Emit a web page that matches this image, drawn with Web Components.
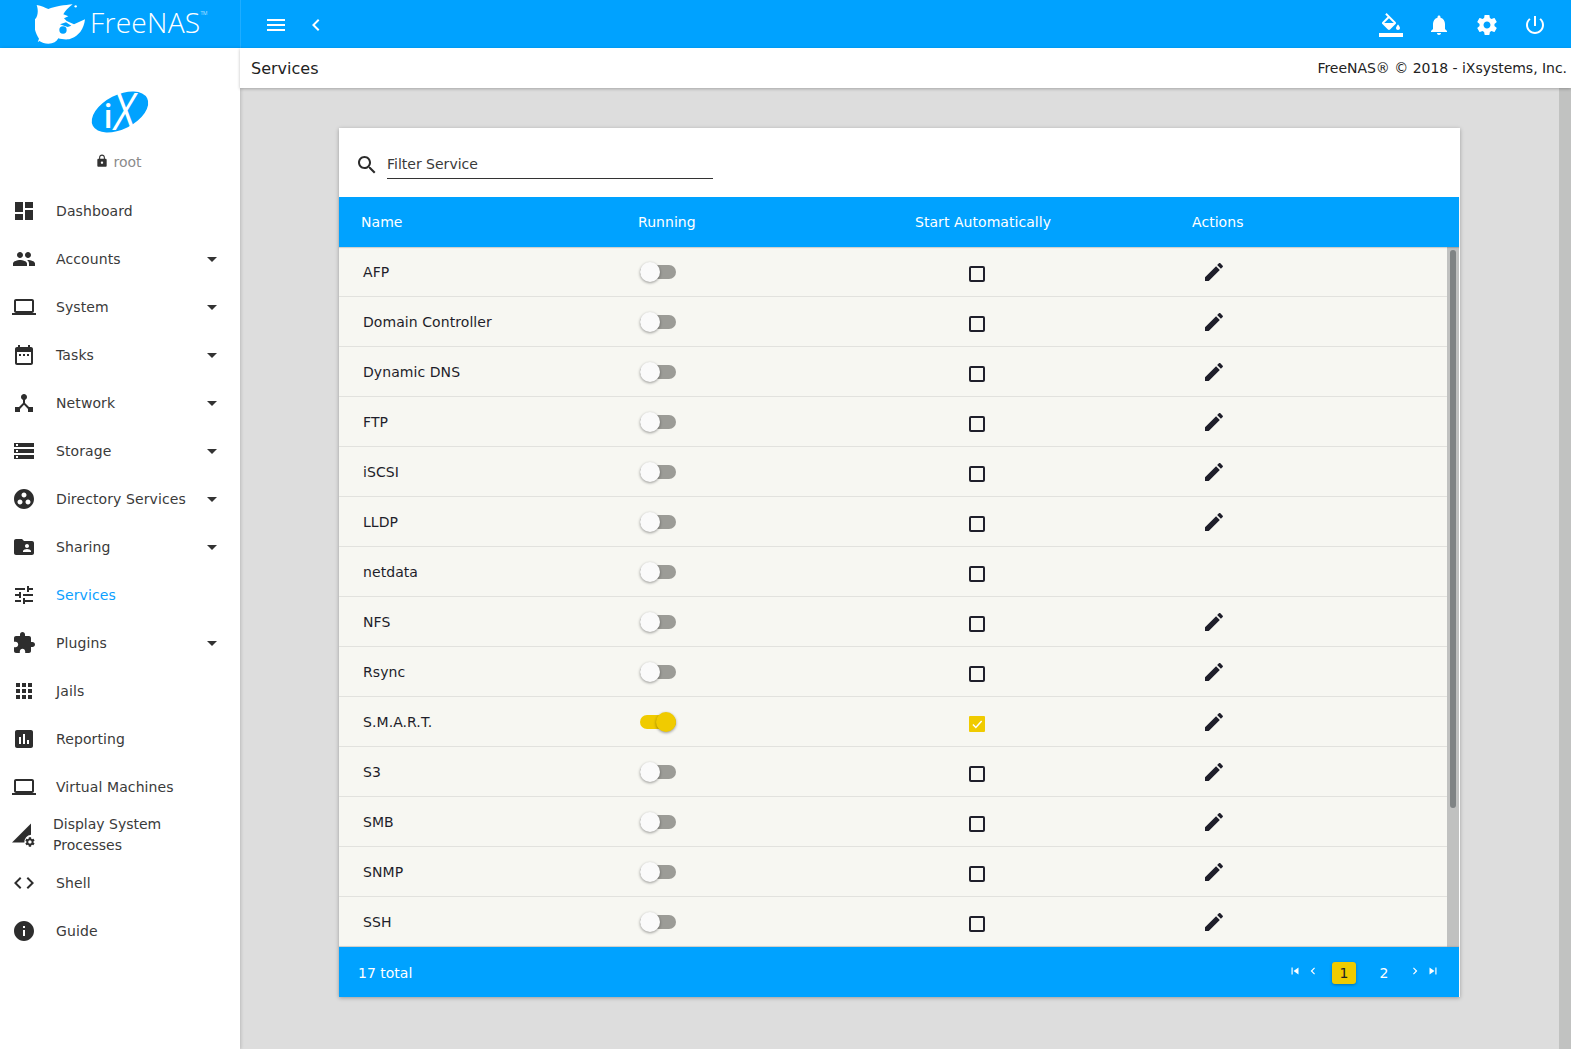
<!DOCTYPE html>
<html lang="en">
<head>
<meta charset="utf-8">
<title>FreeNAS - Services</title>
<style>
html,body{margin:0;padding:0;height:100%;overflow:hidden;background:#ddd;font-family:"DejaVu Sans",sans-serif;font-size:14px;color:#333}
fn-app{height:1049px}
</style>
</head>
<body>
<fn-app></fn-app>
<script>
const ICONS={
dashboard:'<path d="M3 13h8V3H3v10zm0 8h8v-6H3v6zm10 0h8V11h-8v10zm0-18v6h8V3h-8z"/>',
group:'<path d="M16 11c1.66 0 2.99-1.34 2.99-3S17.66 5 16 5c-1.66 0-3 1.34-3 3s1.34 3 3 3zm-8 0c1.66 0 2.99-1.34 2.99-3S9.66 5 8 5C6.34 5 5 6.34 5 8s1.34 3 3 3zm0 2c-2.33 0-7 1.17-7 3.5V19h14v-2.5c0-2.33-4.67-3.5-7-3.5zm8 0c-.29 0-.62.02-.97.05 1.16.84 1.97 1.97 1.97 3.45V19h6v-2.5c0-2.33-4.67-3.5-7-3.5z"/>',
laptop:'<path d="M20 18c1.1 0 1.99-.9 1.99-2L22 6c0-1.1-.9-2-2-2H4c-1.1 0-2 .9-2 2v10c0 1.1.9 2 2 2H0v2h24v-2h-4zM4 6h16v10H4V6z"/>',
date:'<path d="M9 11H7v2h2v-2zm4 0h-2v2h2v-2zm4 0h-2v2h2v-2zm2-7h-1V2h-2v2H8V2H6v2H5c-1.11 0-1.99.9-1.99 2L3 20c0 1.1.89 2 2 2h14c1.1 0 2-.9 2-2V6c0-1.1-.9-2-2-2zm0 16H5V9h14v11z"/>',
hub:'<path d="M17 16l-4-4V8.82C14.16 8.4 15 7.3 15 6c0-1.66-1.34-3-3-3S9 4.34 9 6c0 1.3.84 2.4 2 2.82V12l-4 4H3v5h5v-3.05l4-4.2 4 4.2V21h5v-5h-4z"/>',
storage:'<path d="M2 20h20v-4H2v4zm2-3h2v2H4v-2zM2 4v4h20V4H2zm4 3H4V5h2v2zm-4 7h20v-4H2v4zm2-3h2v2H4v-2z"/>',
work:'<path d="M12 2C6.48 2 2 6.48 2 12s4.48 10 10 10 10-4.48 10-10S17.52 2 12 2zM8 17.5c-1.38 0-2.5-1.12-2.5-2.5s1.12-2.5 2.5-2.5 2.5 1.12 2.5 2.5-1.12 2.5-2.5 2.5zM9.5 8c0-1.38 1.12-2.5 2.5-2.5s2.5 1.12 2.5 2.5-1.12 2.5-2.5 2.5S9.5 9.38 9.5 8zm6.5 9.5c-1.38 0-2.5-1.12-2.5-2.5s1.12-2.5 2.5-2.5 2.5 1.12 2.5 2.5-1.12 2.5-2.5 2.5z"/>',
folder:'<path d="M20 6h-8l-2-2H4c-1.1 0-1.99.9-1.99 2L2 18c0 1.1.9 2 2 2h16c1.1 0 2-.9 2-2V8c0-1.1-.9-2-2-2zm-5 3c1.1 0 2 .9 2 2s-.9 2-2 2-2-.9-2-2 .9-2 2-2zm4 8h-8v-1c0-1.33 2.67-2 4-2s4 .67 4 2v1z"/>',
tune:'<path d="M3 17v2h6v-2H3zM3 5v2h10V5H3zm10 16v-2h8v-2h-8v-2h-2v6h2zM7 9v2H3v2h4v2h2V9H7zm14 4v-2H11v2h10zm-6-4h2V7h4V5h-4V3h-2v6z"/>',
ext:'<path d="M20.5 11H19V7c0-1.1-.9-2-2-2h-4V3.5C13 2.12 11.88 1 10.5 1S8 2.12 8 3.5V5H4c-1.1 0-1.99.9-1.99 2v3.8H3.5c1.49 0 2.7 1.21 2.7 2.7s-1.21 2.7-2.7 2.7H2V20c0 1.1.9 2 2 2h3.8v-1.5c0-1.49 1.21-2.7 2.7-2.7 1.49 0 2.7 1.21 2.7 2.7V22H17c1.1 0 2-.9 2-2v-4h1.5c1.38 0 2.5-1.12 2.5-2.5S21.88 11 20.5 11z"/>',
apps:'<path d="M4 8h4V4H4v4zm6 12h4v-4h-4v4zm-6 0h4v-4H4v4zm0-6h4v-4H4v4zm6 0h4v-4h-4v4zm6-10v4h4V4h-4zm-6 4h4V4h-4v4zm6 6h4v-4h-4v4zm0 6h4v-4h-4v4z"/>',
chart:'<path d="M19 3H5c-1.1 0-2 .9-2 2v14c0 1.1.9 2 2 2h14c1.1 0 2-.9 2-2V5c0-1.1-.9-2-2-2zM9 17H7v-7h2v7zm4 0h-2V7h2v10zm4 0h-2v-4h2v4z"/>',
procs:'<path d="M0 19.5 19 .5v11.2a7.4 7.4 0 0 0-6.6 7.8z"/><g transform="translate(12.3 13.3) scale(.47)"><path d="M19.43 12.98c.04-.32.07-.64.07-.98s-.03-.66-.07-.98l2.11-1.65c.19-.15.24-.42.12-.64l-2-3.46c-.12-.22-.39-.3-.61-.22l-2.49 1c-.52-.4-1.08-.73-1.69-.98l-.38-2.65C14.46 2.18 14.25 2 14 2h-4c-.25 0-.46.18-.49.42l-.38 2.65c-.61.25-1.17.59-1.69.98l-2.49-1c-.23-.09-.49 0-.61.22l-2 3.46c-.13.22-.07.49.12.64l2.11 1.65c-.04.32-.07.65-.07.98s.03.66.07.98l-2.11 1.65c-.19.15-.24.42-.12.64l2 3.46c.12.22.39.3.61.22l2.49-1c.52.4 1.08.73 1.69.98l.38 2.65c.03.24.24.42.49.42h4c.25 0 .46-.18.49-.42l.38-2.65c.61-.25 1.17-.59 1.69-.98l2.49 1c.23.09.49 0 .61-.22l2-3.46c.12-.22.07-.49-.12-.64l-2.11-1.65zM12 15.5c-1.93 0-3.5-1.57-3.5-3.5s1.57-3.5 3.5-3.5 3.5 1.57 3.5 3.5-1.57 3.5-3.5 3.5z"/></g>',
code:'<path d="M9.4 16.6L4.8 12l4.6-4.6L8 6l-6 6 6 6 1.4-1.4zm5.2 0l4.6-4.6-4.6-4.6L16 6l6 6-6 6-1.4-1.4z"/>',
info:'<path d="M12 2C6.48 2 2 6.48 2 12s4.48 10 10 10 10-4.48 10-10S17.52 2 12 2zm1 15h-2v-6h2v6zm0-8h-2V7h2v2z"/>',
gear:'<path d="M19.43 12.98c.04-.32.07-.64.07-.98s-.03-.66-.07-.98l2.11-1.65c.19-.15.24-.42.12-.64l-2-3.46c-.12-.22-.39-.3-.61-.22l-2.49 1c-.52-.4-1.08-.73-1.69-.98l-.38-2.65C14.46 2.18 14.25 2 14 2h-4c-.25 0-.46.18-.49.42l-.38 2.65c-.61.25-1.17.59-1.69.98l-2.49-1c-.23-.09-.49 0-.61.22l-2 3.46c-.13.22-.07.49.12.64l2.11 1.65c-.04.32-.07.65-.07.98s.03.66.07.98l-2.11 1.65c-.19.15-.24.42-.12.64l2 3.46c.12.22.39.3.61.22l2.49-1c.52.4 1.08.73 1.69.98l.38 2.65c.03.24.24.42.49.42h4c.25 0 .46-.18.49-.42l.38-2.65c.61-.25 1.17-.59 1.69-.98l2.49 1c.23.09.49 0 .61-.22l2-3.46c.12-.22.07-.49-.12-.64l-2.11-1.65zM12 15.5c-1.93 0-3.5-1.57-3.5-3.5s1.57-3.5 3.5-3.5 3.5 1.57 3.5 3.5-1.57 3.5-3.5 3.5z"/>',
bell:'<path d="M12 22c1.1 0 2-.9 2-2h-4c0 1.1.89 2 2 2zm6-6v-5c0-3.07-1.64-5.64-4.5-6.32V4c0-.83-.67-1.5-1.5-1.5s-1.5.67-1.5 1.5v.68C7.63 5.36 6 7.92 6 11v5l-2 2v1h16v-1l-2-2z"/>',
power:'<path d="M13 3h-2v10h2V3zm4.83 2.17l-1.42 1.42C17.99 7.86 19 9.81 19 12c0 3.87-3.13 7-7 7s-7-3.13-7-7c0-2.19 1.01-4.14 2.58-5.42L6.17 5.17C4.23 6.82 3 9.26 3 12c0 4.97 4.03 9 9 9s9-4.03 9-9c0-2.74-1.23-5.18-3.17-6.83z"/>',
fill:'<path d="M16.56 8.94L7.62 0 6.21 1.41l2.38 2.38-5.15 5.15c-.59.59-.59 1.54 0 2.12l5.5 5.5c.29.29.68.44 1.06.44s.77-.15 1.06-.44l5.5-5.5c.59-.58.59-1.53 0-2.12zM5.21 10L10 5.21 14.79 10H5.21zM19 11.5s-2 2.17-2 3.5c0 1.1.9 2 2 2s2-.9 2-2c0-1.33-2-3.5-2-3.5z"/><path d="M0 20h24v4H0z"/>',
pencil:'<path d="M3 17.25V21h3.75L17.81 9.94l-3.75-3.75L3 17.25zM20.71 7.04c.39-.39.39-1.02 0-1.41l-2.34-2.34c-.39-.39-1.02-.39-1.41 0l-1.83 1.83 3.75 3.75 1.83-1.83z"/>',
search:'<path d="M15.5 14h-.79l-.28-.27C15.41 12.59 16 11.11 16 9.5 16 5.91 13.09 3 9.5 3S3 5.91 3 9.5 5.91 16 9.5 16c1.61 0 3.09-.59 4.23-1.57l.27.28v.79l5 4.99L20.49 19l-4.99-5zm-6 0C7.01 14 5 11.99 5 9.5S7.01 5 9.5 5 14 7.01 14 9.5 11.99 14 9.5 14z"/>',
lock:'<path d="M18 8h-1V6c0-2.76-2.24-5-5-5S7 3.24 7 6v2H6c-1.1 0-2 .9-2 2v10c0 1.1.9 2 2 2h12c1.1 0 2-.9 2-2V10c0-1.1-.9-2-2-2zm-6 9c-1.1 0-2-.9-2-2s.9-2 2-2 2 .9 2 2-.9 2-2 2zm3.1-9H8.9V6c0-1.71 1.39-3.1 3.1-3.1 1.71 0 3.1 1.39 3.1 3.1v2z"/>',
back:'<path d="M15.41 7.41L14 6l-6 6 6 6 1.41-1.41L10.83 12z"/>',
fwd:'<path d="M8.59 16.59L10 18l6-6-6-6-1.41 1.41L13.17 12z"/>',
menu:'<path d="M3 18h18v-2H3v2zm0-5h18v-2H3v2zm0-7v2h18V6H3z"/>',
first:'<path d="M6 6h2v12H6zm3.5 6l8.5 6V6z"/>',
last:'<path d="M6 18l8.5-6L6 6v12zM16 6v12h2V6h-2z"/>'
};
function def(name,css,html,init){
  customElements.define(name,class extends HTMLElement{
    connectedCallback(){
      if(this.shadowRoot)return;
      const r=this.attachShadow({mode:'open'});
      const a=n=>this.getAttribute(n);
      r.innerHTML='<style>'+css+'</style>'+(typeof html==='function'?html(a,this):html);
      if(init)init(r,this);
    }
  });
}
def('fn-icon',':host{display:inline-flex;width:var(--s,24px);height:var(--s,24px);flex:none}svg{width:100%;height:100%;fill:currentColor;display:block}',
  a=>`<svg viewBox="0 0 24 24" aria-hidden="true">${ICONS[a('name')]||''}</svg>`);

def('fn-brand',`:host{display:flex;align-items:center;width:241px;height:48px;flex:none;box-sizing:border-box;border-right:1px solid rgba(255,255,255,.12);color:#fff;padding-left:35px}
svg{width:52px;height:46px;flex:none;display:block}
.t{font:300 28.2px/44px "Open Sans",sans-serif;margin:0 0 4px 3px;letter-spacing:.25px}
.tm{font:300 5px/1 "Open Sans",sans-serif;align-self:flex-start;margin-top:11px}`,
`<svg viewBox="105 0 156 138" aria-hidden="true"><path fill="#fff" d="M110 12C125 14 135 20 145 24C165 16 195 12 218 10C205 20 195 30 190 40L205 46L192 52L200 60L222 70L255 55C252 85 235 105 215 112C205 118 185 115 175 112C170 122 160 128 145 128C135 128 125 125 118 120L113 124L117 113C105 95 100 75 105 55C115 45 115 25 110 12Z"/><circle cx="189" cy="87" r="11" fill="#00a2ff"/><path fill="#00a2ff" d="M180 70L198 64L214 74L203 78L192 74Z"/><circle cx="227" cy="16" r="3.5" fill="#fff"/></svg><span class="t">FreeNAS</span><span class="tm">TM</span>`);

def('fn-topbar',`:host{display:flex;align-items:center;height:48px;background:#00a2ff;color:#fff;flex:none}
.l{display:flex;align-items:center;margin-left:23px;margin-top:2px}.l fn-icon+fn-icon{margin-left:16px}
.sp{flex:1}
.r{display:flex;align-items:center;gap:24px;margin-right:24px;margin-top:2px}`,
`<fn-brand></fn-brand><div class="l"><fn-icon name="menu"></fn-icon><fn-icon name="back"></fn-icon></div><div class="sp"></div><div class="r"><fn-icon name="fill"></fn-icon><fn-icon name="bell"></fn-icon><fn-icon name="gear"></fn-icon><fn-icon name="power"></fn-icon></div>`);

def('fn-nav-item',`:host{display:flex;align-items:center;height:48px;padding-left:12px;padding-right:23px;font-size:14px;line-height:21px;color:#3a3a3a;flex:none;letter-spacing:.1px}
:host([active]){color:#0d9fff}
fn-icon{color:#2d2d2d}
.x{flex:1;margin-left:20px}
:host([tight]) .x{margin-left:17px;width:140px;flex:none;letter-spacing:0}
.c{width:0;height:0;border-left:5px solid transparent;border-right:5px solid transparent;border-top:5px solid #333}`,
(a,el)=>`<fn-icon name="${a('icon')}"></fn-icon><span class="x"><slot></slot></span>${a('caret')!==null?'<span class="c"></span>':''}`);

def('fn-sidebar',`:host{display:flex;flex-direction:column;width:240px;flex:none;background:#fff;box-shadow:1px 0 3px rgba(0,0,0,.16);z-index:1}
.p{height:139px;display:flex;flex-direction:column;align-items:center;flex:none}
svg.ix{width:64px;height:50px;margin-top:40px;display:block;overflow:visible}
.u{display:flex;align-items:center;margin-top:14px;color:#8b8b8b;font-size:14px;line-height:20px;margin-left:-3px}
.u fn-icon{--s:14px;color:#333;margin-right:4px;margin-top:-2px}`,
`<div class="p"><svg class="ix" viewBox="0 0 64 50" aria-hidden="true"><ellipse cx="32" cy="24" rx="30.5" ry="17" fill="#00a2ff" transform="rotate(-27 32 24)"/><text x="15.5" y="40" font-family="Open Sans" font-size="33" font-weight="600" fill="#fff">i</text><text transform="translate(24 42) skewX(-6) scale(.76 1)" font-family="Open Sans" font-size="52" font-weight="400" fill="#fff">X</text></svg><div class="u"><fn-icon name="lock"></fn-icon><span>root</span></div></div>
<slot></slot>`);

def('fn-pagehead',`:host{display:flex;align-items:center;justify-content:space-between;height:40px;background:#fff;box-shadow:0 1px 3px rgba(0,0,0,.25);padding:0 4px 0 11px;flex:none;z-index:1;color:#222}
.t{font-size:16px}.c{font-size:14px;letter-spacing:-.03px}`,
`<span class="t"><slot name="title"></slot></span><span class="c"><slot name="copy"></slot></span>`);

def('fn-switch',`:host{display:inline-block;position:relative;width:36px;height:14px;border-radius:7px;background:#9c9c97;flex:none}
i{position:absolute;top:-3px;left:0;width:20px;height:20px;border-radius:50%;background:#fafafa;box-shadow:0 1px 3px rgba(0,0,0,.4)}
:host([on]){background:#f0cb00}
:host([on]) i{left:16px;background:#f0cb00}`,`<i></i>`);

def('fn-check',`:host{display:inline-flex;width:16px;height:16px;box-sizing:border-box;border:2px solid #1f1f2b;border-radius:2px;flex:none;position:relative;top:2px}
:host([on]){background:#f0cb00;border-color:#f0cb00;border-radius:1px}
svg{width:14px;height:14px;margin:-1px;display:block}`,
a=>a('on')!==null?`<svg viewBox="0 0 24 24" fill="none" stroke="#fff" stroke-width="2.6"><path d="M5 13l5 5L20 7"/></svg>`:'');

def('fn-service-row',`:host{display:grid;grid-template-columns:277px 277px 277px 1fr;align-items:center;height:50px;box-sizing:border-box;padding-left:24px;border-bottom:1px solid #e2e2de;color:#1e1e2a;font-size:14px;flex:none;letter-spacing:.07px}
.s{display:flex;align-items:center;padding-left:0}
.k{display:flex;padding-left:52px}
.a{display:flex;padding-left:8px;color:#1e1e2a}`,
a=>`<span><slot></slot></span><div class="s"><fn-switch ${a('on')!==null?'on':''}></fn-switch></div><div class="k"><fn-check ${a('on')!==null?'on':''}></fn-check></div><div class="a">${a('noedit')!==null?'':'<fn-icon name="pencil"></fn-icon>'}</div>`);

def('fn-pager',`:host{display:flex;align-items:center;height:50px;background:#00a2ff;color:#fff;font-size:14px;padding:0 19px 0 19px;flex:none;box-shadow:0 -1px 1px rgba(0,0,0,.08)}
.t{flex:1;padding-top:1px}
fn-icon{--s:14px;margin-top:-3px}
.b{display:flex;align-items:center;justify-content:center;width:24px;height:22px;border-radius:3px;background:#f0cb00;color:#222;box-shadow:0 1px 3px rgba(0,0,0,.3);margin:1px 0 0 12px}
.n{width:20px;text-align:center;margin:1px 0 0 18px}
.g4{margin-left:4px}.g14{margin-left:14px}`,
`<span class="t">17 total</span><fn-icon name="first"></fn-icon><fn-icon class="g4" name="back"></fn-icon><span class="b">1</span><span class="n">2</span><fn-icon class="g14" name="fwd"></fn-icon><fn-icon class="g4" name="last"></fn-icon>`);

def('fn-services-card',`:host{display:flex;flex-direction:column;width:1121px;height:869px;background:#fff;box-shadow:0 1px 4px rgba(0,0,0,.3);flex:none;box-sizing:border-box;padding-right:1px}
.f{display:flex;align-items:flex-start;height:69px;flex:none;box-sizing:border-box;padding:25px 0 0 16px}
.f fn-icon{color:#2b2b2b}
.inp{width:326px;margin-left:8px;height:26px;padding-top:1px;box-sizing:border-box;border-bottom:1px solid #333;font-size:14px;line-height:21px;color:#3a3a3a}
.h{display:grid;grid-template-columns:277px 277px 277px 1fr;align-items:center;height:50px;padding-left:22px;background:#00a2ff;color:#fff;font-size:14px;flex:none;box-sizing:border-box;box-shadow:0 1px 1px rgba(0,0,0,.15);position:relative;z-index:1;letter-spacing:.05px}
.b{display:flex;flex:1;min-height:0;background:#f7f7f2}
.rows{flex:1;display:flex;flex-direction:column;min-width:0}
.track{width:12px;flex:none;background:#c0c1c0;padding-top:3px;box-sizing:border-box}
.thumb{width:6px;height:558px;margin-left:3px;border-radius:3px;background:#7f8384}`,
`<div class="f"><fn-icon name="search"></fn-icon><div class="inp">Filter Service</div></div>
<div class="h"><span>Name</span><span>Running</span><span>Start Automatically</span><span>Actions</span></div>
<div class="b"><div class="rows"><slot></slot></div><div class="track"><div class="thumb"></div></div></div>
<fn-pager></fn-pager>`);

def('fn-app',`:host{display:flex;flex-direction:column;width:1571px;overflow:hidden}
.m{display:flex;flex:1;min-height:0}
.w{display:flex;flex-direction:column;flex:1;min-width:0}
.c{display:flex;flex:1;min-height:0}
.pg{flex:1;padding:40px 99px;background:#ddd;min-width:0}
.sb{width:12px;background:#c1c2c1;flex:none}`,
`<fn-topbar></fn-topbar><div class="m"><fn-sidebar>
<fn-nav-item icon="dashboard">Dashboard</fn-nav-item>
<fn-nav-item icon="group" caret>Accounts</fn-nav-item>
<fn-nav-item icon="laptop" caret>System</fn-nav-item>
<fn-nav-item icon="date" caret>Tasks</fn-nav-item>
<fn-nav-item icon="hub" caret>Network</fn-nav-item>
<fn-nav-item icon="storage" caret>Storage</fn-nav-item>
<fn-nav-item icon="work" caret>Directory Services</fn-nav-item>
<fn-nav-item icon="folder" caret>Sharing</fn-nav-item>
<fn-nav-item icon="tune" active>Services</fn-nav-item>
<fn-nav-item icon="ext" caret>Plugins</fn-nav-item>
<fn-nav-item icon="apps">Jails</fn-nav-item>
<fn-nav-item icon="chart">Reporting</fn-nav-item>
<fn-nav-item icon="laptop">Virtual Machines</fn-nav-item>
<fn-nav-item icon="procs" tight>Display System Processes</fn-nav-item>
<fn-nav-item icon="code">Shell</fn-nav-item>
<fn-nav-item icon="info">Guide</fn-nav-item>
</fn-sidebar><div class="w"><fn-pagehead><span slot="title">Services</span><span slot="copy">FreeNAS® © 2018 - iXsystems, Inc.</span></fn-pagehead>
<div class="c"><div class="pg"><fn-services-card>
<fn-service-row>AFP</fn-service-row>
<fn-service-row>Domain Controller</fn-service-row>
<fn-service-row>Dynamic DNS</fn-service-row>
<fn-service-row>FTP</fn-service-row>
<fn-service-row>iSCSI</fn-service-row>
<fn-service-row>LLDP</fn-service-row>
<fn-service-row noedit>netdata</fn-service-row>
<fn-service-row>NFS</fn-service-row>
<fn-service-row>Rsync</fn-service-row>
<fn-service-row on>S.M.A.R.T.</fn-service-row>
<fn-service-row>S3</fn-service-row>
<fn-service-row>SMB</fn-service-row>
<fn-service-row>SNMP</fn-service-row>
<fn-service-row>SSH</fn-service-row>
</fn-services-card></div><div class="sb"></div></div></div></div>`);
</script>
</body>
</html>
